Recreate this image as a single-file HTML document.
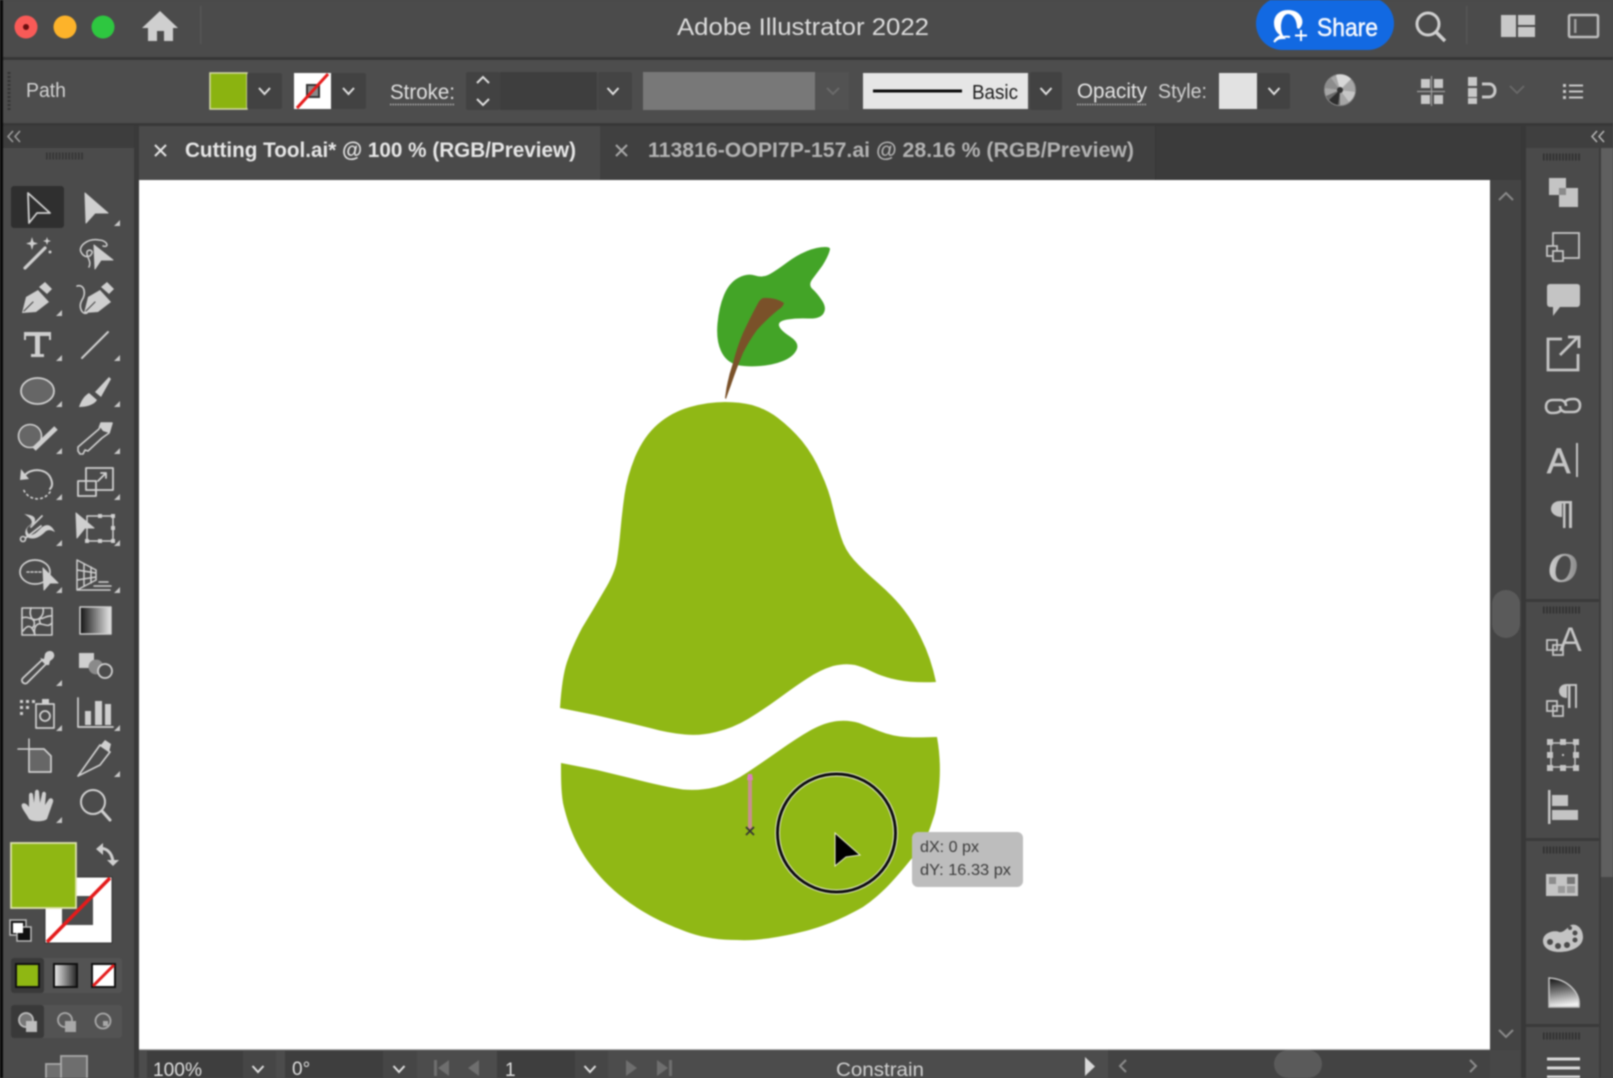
<!DOCTYPE html>
<html><head><meta charset="utf-8"><title>Adobe Illustrator 2022</title>
<style>
html,body{margin:0;padding:0;background:#4a4a4a;width:1613px;height:1078px;overflow:hidden}
svg{display:block;filter:blur(.7px)}
text{font-family:"Liberation Sans",sans-serif}
</style></head><body>
<svg xmlns="http://www.w3.org/2000/svg" width="1613" height="1078" viewBox="0 0 1613 1078">
<defs>
<path id="c" d="M0 6L6 6L6 0Z" fill="#c8c8c8"/>
<path id="ch" d="M-5.500 -3L0 3L5.500 -3" fill="none" stroke="#e0e0e0" stroke-width="2"/>
<linearGradient id="gr"><stop offset="0" stop-color="#111"/><stop offset="1" stop-color="#e8e8e8"/></linearGradient>
<linearGradient id="gr2"><stop offset="0" stop-color="#eee"/><stop offset="1" stop-color="#222"/></linearGradient>
<linearGradient id="gq" x1="0" y1="0" x2="0.150" y2="1"><stop offset="0" stop-color="#111"/><stop offset=".5" stop-color="#777"/><stop offset="1" stop-color="#f0f0f0"/></linearGradient>
<linearGradient id="go" x1="0" y1="0" x2="1" y2="0"><stop offset="0" stop-color="#d0d0d0"/><stop offset="1" stop-color="#8a8a8a"/></linearGradient>
</defs>

<!-- base panels -->
<rect width="1613" height="1078" fill="#4a4a4a"/>
<rect x="0" y="0" width="1613" height="57" fill="#4b4b4b"/>
<rect x="0" y="57" width="1613" height="3" fill="#363636"/>
<rect x="0" y="60" width="1613" height="63" fill="#4d4d4d"/>
<rect x="0" y="123" width="1613" height="3" fill="#383838"/>
<rect x="0" y="126" width="1613" height="54" fill="#3b3b3b"/>
<rect x="3" y="126" width="134" height="22" fill="#3d3d3d"/>
<rect x="3" y="148" width="131" height="930" fill="#4b4b4b"/>
<rect x="134" y="126" width="5" height="952" fill="#3a3a3a"/>
<rect x="0" y="0" width="3" height="1078" fill="#0a0a0a"/>
<!-- tabs -->
<rect x="139" y="126" width="461" height="54" fill="#4a4a4a"/>
<rect x="600" y="126" width="555" height="54" fill="#404040"/>
<rect x="1155" y="126" width="1" height="54" fill="#363636"/>
<path d="M155 145L166 156M166 145L155 156" stroke="#e4e4e4" stroke-width="2"/>
<text x="185" y="157" font-size="21" font-weight="bold" fill="#e6e6e6" textLength="391" lengthAdjust="spacingAndGlyphs">Cutting Tool.ai* @ 100 % (RGB/Preview)</text>
<path d="M616 145L627 156M627 145L616 156" stroke="#a8a8a8" stroke-width="2"/>
<text x="648" y="157" font-size="21" font-weight="bold" fill="#b2b2b2" textLength="486" lengthAdjust="spacingAndGlyphs">113816-OOPI7P-157.ai @ 28.16 % (RGB/Preview)</text>

<!-- right side -->
<rect x="1490" y="180" width="31" height="898" fill="#444"/>
<rect x="1521" y="126" width="5" height="952" fill="#383838"/>
<rect x="1526" y="126" width="87" height="22" fill="#3f3f3f"/>
<rect x="1526" y="148" width="73" height="930" fill="#4a4a4a"/>
<rect x="1601" y="148" width="12" height="729" fill="#5f5f5f"/>
<rect x="1601" y="877" width="12" height="201" fill="#454545"/>
<rect x="1599" y="148" width="2" height="930" fill="#3c3c3c"/>
<rect x="1526" y="599" width="73" height="3" fill="#3a3a3a"/>
<rect x="1526" y="838" width="73" height="3" fill="#3a3a3a"/>
<rect x="1526" y="1024" width="73" height="3" fill="#3a3a3a"/>
<path d="M1543 157H1580M1543 610H1580M1543 850H1580M1543 1036H1580" stroke="#262626" stroke-width="7" stroke-dasharray="1.600 1.600" opacity=".75"/>
<path d="M1597 131L1592 136.500L1597 142M1604 131L1599 136.500L1604 142" fill="none" stroke="#b8b8b8" stroke-width="1.500"/>
<rect x="1492" y="590" width="28" height="48" rx="14" fill="#5a5a5a"/>
<path d="M1499 200L1506 193L1513 200" fill="none" stroke="#8a8a8a" stroke-width="2"/>
<path d="M1499 1030L1506 1037L1513 1030" fill="none" stroke="#8a8a8a" stroke-width="2"/>

<!-- canvas -->
<rect x="139" y="180" width="1351" height="870" fill="#fff"/>
<rect x="139" y="1049" width="1351" height="1.500" fill="#bbb"/>

<!-- pear -->
<path fill="#90b815" d="M560 708Q562 677 567 662Q572 647 582 628Q593 610 604 591Q615 573 617 560Q619 547 620.500 530Q622 513 624.500 495Q627 477 635 457Q644 436 658 424Q672 412 690 407Q708 402 725 402Q740 402 752 405Q766 409 778 418Q791 428 802 441Q814 456 821 473Q829 490 833 508Q837 525 841 537Q845 550 854 560Q863 570 878 583Q894 597 904 610Q914 623 921 638Q931 658 936 682Q913 683 898 680Q883 677 873 672Q863 667 855 665Q845 663 833 666Q820 670 808 678Q797 685 780 697.500Q763 710 748 719Q733 728 716 732Q700 736 685 734.500Q668 733 650 728Q630 723 595 715Z"/>
<path fill="#90b815" d="M561 763L597 770L630 778Q665 787 683 789.500Q700 791 716 787Q732 783 748 772Q763 762 780 750Q797 738 811 730Q826 722 838 721Q849 720 859 723Q869 727 879 731Q889 735 900 736.500Q911 738 937 737C942 765 940 790 935 813C928 835 925 843 913 857C898 875 885 892 863 907C840 920 820 928 797 933C775 938 755 941 737 940C720 940 705 938 690 933C668 925 650 917 630 903C612 890 600 878 587 860C575 842 568 825 563 803C561 790 561 778 561 763Z"/>
<path fill="#43a427" d="M830 249Q829 255 822.500 265.500Q817 273 812.500 279Q808 285 812.500 289Q817 293 822 300.500Q827 308 823.500 313.500Q820 319 808.500 318.500Q797 318 787.500 319.500Q778 321 779 325.500Q780 330 790 336.500Q800 343 796.500 350Q793 357 783 361Q773 365 760 366Q747 367 737 365Q726 362 721 351Q716 340 717.500 323.500Q719 307 724 295Q729 283 738 278Q747 273 755 275.500Q763 278 770 274Q777 270 787 262.500Q797 255 807 251Q817 247 825 247Q830 247 830 249Z"/>
<path fill="#7a5129" d="M763 298Q775 297 784 303Q783 307 778 310Q768 318 757 330Q749 341 743 353Q736 370 731 385Q728 393 726 399L725 398Q727 380 733 363Q737 347 743 333Q750 318 757 305Q760 299 763 298Z"/>
<!-- guide -->
<path d="M750 776V829" stroke="#c98f8f" stroke-width="4"/>
<path d="M748 774L752 774L753 780L747 780Z" fill="#dd7fc0"/>
<path d="M746 827L754 835M754 827L746 835" stroke="#333" stroke-width="1.700"/>
<!-- cursor -->
<circle cx="836.500" cy="833" r="59" fill="none" stroke="#e8eecf" stroke-width="5"/>
<circle cx="836.500" cy="833" r="59" fill="none" stroke="#0c0c0c" stroke-width="3"/>
<path d="M835 833L860 855L846 857L835 866Z" fill="#000" stroke="#e8eecf" stroke-width="1"/>
<!-- tooltip -->
<rect x="912" y="832" width="111" height="55" rx="6" fill="#bdbdbd"/>
<text x="920" y="852" font-size="16" fill="#3a3a3a" textLength="59" lengthAdjust="spacingAndGlyphs">dX: 0 px</text>
<text x="920" y="875" font-size="16" fill="#3a3a3a" textLength="91" lengthAdjust="spacingAndGlyphs">dY: 16.33 px</text>

<!-- title bar -->
<circle cx="26" cy="27" r="11.500" fill="#f95a57"/><circle cx="26" cy="27" r="3" fill="#6b0f0f"/>
<circle cx="65" cy="27" r="11.500" fill="#fdb32a"/>
<circle cx="103" cy="27" r="11.500" fill="#2ec740"/>
<path d="M160 11L178 28H173V41H164V31H157V41H148V28H142Z" fill="#cfcfcf"/>
<rect x="200" y="6" width="1.500" height="38" fill="#565656"/>
<text x="677" y="35" font-size="24" fill="#dcdcdc" textLength="252" lengthAdjust="spacingAndGlyphs">Adobe Illustrator 2022</text>
<rect x="1256" y="-3" width="138" height="53" rx="26.500" fill="#1269e2"/>
<path d="M1288 10C1279 10 1274 16 1274 23C1274 29 1277 33 1280 35C1277 37 1274 39 1274 41C1278 39 1282 39 1286 39C1284 37 1281 34 1281 27C1281 20 1284 14 1288 14C1293 14 1297 20 1297 28L1299 29C1302 26 1303 23 1302 19C1300 13 1295 10 1288 10Z" fill="#fff"/>
<path d="M1274 42C1278 37 1286 36 1290 37M1301 30V41M1295 35.500H1307" fill="none" stroke="#fff" stroke-width="2"/>
<text x="1317" y="36" font-size="25" fill="#f4f8ff" stroke="#f4f8ff" stroke-width=".5" textLength="61" lengthAdjust="spacingAndGlyphs">Share</text>
<circle cx="1428" cy="24" r="11" fill="none" stroke="#cfcfcf" stroke-width="3"/>
<path d="M1436 32L1445 41" stroke="#cfcfcf" stroke-width="3.500"/>
<rect x="1466" y="6" width="1.500" height="38" fill="#565656"/>
<path d="M1501 15H1516V37H1501ZM1518 15H1535V25H1518ZM1518 27H1535V37H1518Z" fill="#c8c8c8"/>
<rect x="1569" y="15" width="29" height="22" rx="1.500" fill="none" stroke="#bdbdbd" stroke-width="2.500"/>
<rect x="1574" y="19" width="2.500" height="14" fill="#9e9e9e"/>

<!-- control bar -->
<path d="M9 72V112" stroke="#333" stroke-width="3" stroke-dasharray="2 2"/>
<text x="26" y="97" font-size="20" fill="#d2d2d2" textLength="40" lengthAdjust="spacingAndGlyphs">Path</text>
<rect x="210" y="73" width="37" height="36" fill="#8bb310" stroke="#d6dca8" stroke-width="1.500"/>
<rect x="247" y="73" width="35" height="36" rx="2" fill="#424242"/>
<use href="#ch" x="264.500" y="91"/>
<rect x="294" y="73" width="37" height="36" fill="#fff"/>
<rect x="307" y="85" width="12" height="12" fill="#8a8a8a" stroke="#333" stroke-width="2"/>
<path d="M297 108L328 74" stroke="#e61c1c" stroke-width="3"/>
<rect x="331" y="73" width="35" height="36" rx="2" fill="#424242"/>
<use href="#ch" x="348.500" y="91"/>
<text x="390" y="99" font-size="21" fill="#e0e0e0" textLength="65" lengthAdjust="spacingAndGlyphs">Stroke:</text>
<path d="M390 104.500H455" stroke="#b0b0b0" stroke-width="1.500" stroke-dasharray="1.500 1"/>
<rect x="466" y="72" width="34" height="38" rx="2" fill="#424242"/>
<path d="M477 83L483 77L489 83M477 99L483 105L489 99" fill="none" stroke="#e0e0e0" stroke-width="2"/>
<rect x="500" y="72" width="97" height="38" fill="#3e3e3e"/>
<rect x="598" y="72" width="34" height="38" rx="2" fill="#444"/>
<use href="#ch" x="613" y="91"/>
<rect x="643" y="72" width="172" height="38" fill="#787878"/>
<rect x="815" y="72" width="34" height="38" fill="#525252"/>
<path d="M827 88L833 94L839 88" fill="none" stroke="#6a6a6a" stroke-width="2"/>
<rect x="863" y="73" width="165" height="36" fill="#e6e6e6"/>
<rect x="873" y="89.500" width="89" height="3" fill="#0a0a0a"/>
<text x="972" y="99" font-size="20" fill="#1c1c1c" textLength="46" lengthAdjust="spacingAndGlyphs">Basic</text>
<rect x="1030" y="72" width="32" height="38" rx="2" fill="#424242"/>
<use href="#ch" x="1046" y="91"/>
<text x="1077" y="98" font-size="21" fill="#e4e4e4" textLength="70" lengthAdjust="spacingAndGlyphs">Opacity</text>
<path d="M1077 104.500H1147" stroke="#b0b0b0" stroke-width="1.500" stroke-dasharray="1.500 1"/>
<text x="1158" y="98" font-size="20" fill="#d0d0d0" textLength="49" lengthAdjust="spacingAndGlyphs">Style:</text>
<rect x="1219" y="73" width="38" height="36" fill="#e2e2e2"/>
<rect x="1257" y="73" width="33" height="36" rx="2" fill="#424242"/>
<use href="#ch" x="1274" y="91"/>
<!-- color wheel -->
<circle cx="1340" cy="90" r="15.500" fill="#a6a6a6" stroke="#8a8a8a" stroke-width="1"/>
<path d="M1340 90L1326 96A15 15 0 0 0 1340 105Z" fill="#6a6a6a"/>
<path d="M1340 90L1329 100A15 15 0 0 0 1338 105Z" fill="#2e2e2e"/>
<path d="M1340 90L1351 79A15 15 0 0 0 1336 75Z" fill="#d8d8d8"/>
<path d="M1340 90L1355 92A15 15 0 0 1 1349 102Z" fill="#c6c6c6"/>
<path d="M1340 90L1325 88A15 15 0 0 1 1331 78Z" fill="#8c8c8c"/>
<circle cx="1340" cy="90" r="3" fill="#333"/>
<path d="M1421 79h9v9h-9zM1434 79h9v9h-9zM1421 95h9v9h-9zM1434 95h9v9h-9z" fill="#c8c8c8"/>
<path d="M1417 91.500H1445M1431.500 76V106" stroke="#a0a0a0" stroke-width="1.200"/>
<path d="M1468 77h9v9h-9zM1468 88h9v9h-9zM1468 98h9v6h-9z" fill="#c8c8c8"/>
<path d="M1482 84H1489C1497 84 1497 97 1489 97H1482" fill="none" stroke="#c8c8c8" stroke-width="3"/>
<path d="M1510 86L1517 93L1524 86" fill="none" stroke="#6a6a6a" stroke-width="1.800"/>
<path d="M1563 84h3v3h-3zM1563 90h3v3h-3zM1563 96h3v3h-3z" fill="#c8c8c8"/>
<path d="M1569 85.500H1583M1569 91.500H1583M1569 97.500H1583" stroke="#c8c8c8" stroke-width="2"/>

<!-- left panel header -->
<path d="M13 131L8 136.500L13 142M20 131L15 136.500L20 142" fill="none" stroke="#a0a0a0" stroke-width="1.500"/>
<path d="M46 156H84" stroke="#2b2b2b" stroke-width="7" stroke-dasharray="1.600 1.600" opacity=".7"/>

<!-- tools -->
<rect x="11" y="186" width="53" height="42" rx="3" fill="#2f2f2f"/>
<g fill="#cfcfcf" stroke="#cfcfcf" stroke-linecap="round" stroke-linejoin="round">
<path d="M28 193L50 213L37 213L29 223Z" fill="none" stroke-width="1.800"/>
<path d="M85 193L108 213L95 213L86 223Z" stroke-width="1"/>
<g transform="translate(37,254)">
<path d="M-12 14L8 -6" stroke-width="3.200" fill="none"/>
<path d="M-5 -17L-3.500 -12L1 -10.500L-3.500 -9L-5 -4L-6.500 -9L-11 -10.500L-6.500 -12Z" stroke="none"/>
<path d="M10 -17L11 -14L14 -13L11 -12L10 -9L9 -12L6 -13L9 -14Z" stroke="none"/>
<circle cx="13" cy="-2" r="1.500" stroke="none"/>
</g>
<g transform="translate(96,254)">
<path d="M-2 -9L17 6L5 6L-1 15Z" stroke-width="1"/>
<path d="M7 -8C14 -6 11 -14 3 -14C-8 -16 -18 -8 -15 -2C-12 4 -6 4 -4 -1C-3 -4 -8 -5 -9 -2C-10 3 -4 7 -7 13" fill="none" stroke-width="1.500"/>
</g>
<g transform="translate(37,300)">
<path d="M-15 13L-11 -3L1 -10L12 2L-1 12Z" stroke="none"/>
<path d="M2 -13L8 -18L15 -11L10 -6Z" stroke="none"/>
<path d="M-13 11L-4 2" stroke="#4b4b4b" stroke-width="1.200" fill="none"/>
</g>
<g transform="translate(99,300)">
<path d="M-15 13L-11 -3L1 -10L12 2L-1 12Z" stroke="none"/>
<path d="M2 -13L8 -18L15 -11L10 -6Z" stroke="none"/>
<path d="M-13 11L-4 2" stroke="#4b4b4b" stroke-width="1.200" fill="none"/>
<path d="M-22 -14C-14 -16 -13 -6 -17 0C-21 7 -17 15 -12 13" fill="none" stroke-width="1.600"/>
</g>
<path transform="translate(37,345)" d="M-13 -13H14V-5H12V-9H3V9H7V12H-6V9H-2V-9H-11V-5H-13Z" stroke="none"/>
<path d="M82 358L108 332" stroke-width="2" fill="none"/>
<ellipse cx="37.500" cy="391" rx="16.500" ry="13" fill="#666" stroke-width="1.800"/>
<g transform="translate(96,391)">
<path d="M-1 1L13 -14L15 -12L5 6Z" stroke="none"/>
<path d="M-17 16C-15 10 -12 5 -7 2L1 9C-2 14 -10 16 -17 16Z" stroke="none"/>
</g>
<circle cx="30" cy="436" r="11.500" fill="#666" stroke-width="1.600"/>
<path d="M34 449L56 428" stroke-width="5" fill="none" stroke-linecap="butt"/>
<g transform="translate(96,438)">
<path d="M-18 9L3 -9L5 -15L16 -15L13 -5L6 0L-8 13L-11 12L-13 16L-16 16L-18 13Z" fill="none" stroke-width="1.600"/>
<path d="M3 -12L5 -15L16 -15L13 -5L7 -7Z" stroke="none"/>
</g>
<g transform="translate(37,482)">
<path d="M-12 -7C-6 -14 10 -14 14 -3C16 2 15 5 13 7" fill="none" stroke-width="2"/>
<path d="M-16 -13L-8 -3L-17 -2Z" stroke="none"/>
<path d="M13 10A15 15 0 0 1 -14 6" fill="none" stroke-width="1.700" stroke-dasharray="1.500 3.500"/>
</g>
<g transform="translate(95,483)">
<rect x="-9" y="-15" width="27" height="22" fill="none" stroke-width="1.800"/>
<rect x="-17" y="-2" width="18" height="15" fill="none" stroke-width="1.800"/>
<path d="M3 -2L11 -10M6 -10H11V-5" fill="none" stroke-width="1.800"/>
</g>
<g transform="translate(37,528)">
<path d="M-13 -14C-6 -13 -1 -12 -2 -7C-3 -2 -13 -3 -9 5C-6 9 -2 6 3 1C9 -5 14 -4 18 4C14 2 11 1 8 4C4 8 -2 12 -8 10C-14 7 -12 0 -7 -3C-4 -5 -4 -9 -13 -14Z" stroke="none"/>
<path d="M-14 12L4 -2M-6 -1L5 -12" fill="none" stroke-width="1.800"/>
<circle cx="-14" cy="11" r="2.500" fill="#4b4b4b" stroke-width="1.600"/>
</g>
<g transform="translate(94,528)">
<rect x="-7" y="-12" width="26" height="25" fill="none" stroke-width="1.500"/>
<path d="M-18 -15L0 0L-9 0L-17 10Z" stroke-width="1"/>
<path d="M-9 11h4v4h-4zM4 11h4v4h-4zM17 11h4v4h-4zM17 -2h4v4h-4zM17 -14h4v4h-4zM4 -14h4v4h-4z" stroke="none"/>
</g>
<g transform="translate(37,575)">
<ellipse cx="-2" cy="-3" rx="15" ry="12" fill="none" stroke-width="1.700"/>
<path d="M-10 -3H4" fill="none" stroke-width="1.500" stroke-dasharray="2 2"/>
<path d="M6 -7L21 8L13 8L7 15Z" stroke-width="1"/>
</g>
<g transform="translate(94,575)" fill="none" stroke-width="1.500">
<path d="M-17 -15V15H16M-17 -15L2 -5V5L-17 15M-10 -11V11M-3 -8V8M-17 -5L2 -2M-17 5L2 2"/>
<path d="M5 7H14M0 11H17"/>
</g>
<g transform="translate(37,621)" fill="none" stroke-width="1.600">
<rect x="-15" y="-13" width="30" height="27"/>
<path d="M-15 -3C-8 -6 -3 2 3 -3C8 -8 6 -12 6 -13M-14 10C-9 3 -5 4 -2 14M-2 14C-4 6 0 2 4 3C10 4 11 6 15 2M3 -3C6 -1 9 -6 15 -5M-6 -13C-8 -7 -6 -3 -3 0C-2 3 -3 6 -5 7M3 -3C2 0 3 2 4 3"/>
</g>
<rect x="80" y="607" width="31" height="27" fill="url(#gr)" stroke-width="1.500"/>
<g transform="translate(37,668)">
<path d="M-14 10L5 -8L9 -4L-10 15C-13 17 -17 13 -14 10Z" fill="none" stroke-width="1.800"/>
<path d="M3 -10L7 -9L8 -14C10 -18 16 -18 17 -14C18 -11 16 -9 13 -7L12 -3L9 -3Z" stroke="none"/>
</g>
<g transform="translate(95,668)">
<rect x="-16" y="-15" width="15" height="15" stroke="none"/>
<circle cx="1" cy="-1" r="7.500" fill="#8a8a8a" stroke="none"/>
<circle cx="10" cy="3" r="7" fill="#4b4b4b" stroke-width="1.800"/>
</g>
<g transform="translate(37,713)">
<path d="M-17 -13h3v3h-3zM-11 -13h3v3h-3zM-5 -13h3v3h-3zM-17 -7h3v3h-3zM-11 -7h3v3h-3zM-17 -1h3v3h-3z" stroke="none"/>
<rect x="-1" y="-9" width="18" height="24" fill="none" stroke-width="1.700"/>
<rect x="5" y="-14" width="7" height="5" stroke="none"/>
<circle cx="8" cy="3" r="5" fill="none" stroke-width="1.800"/>
</g>
<g transform="translate(95,713)">
<path d="M-17 -15V14H18" fill="none" stroke-width="1.700"/>
<rect x="-10" y="-2" width="6" height="14" stroke="none"/>
<rect x="0" y="-12" width="7" height="24" stroke="none"/>
<rect x="10" y="-9" width="6" height="21" stroke="none"/>
</g>
<g transform="translate(37,759)">
<path d="M-8 -10H7L14 -3V13H-8Z" fill="#666" stroke-width="1.700"/>
<path d="M-8 -20V-10M-19 -10H-8" fill="none" stroke-width="1.500"/>
</g>
<g transform="translate(95,760)">
<path d="M-17 16L5 -15L15 -8L5 5Z" fill="none" stroke-width="1.700"/>
<path d="M5 -14L10 -20L16 -16L14 -8Z" stroke="none"/>
</g>
<path transform="translate(38,805)" d="M-9 14C-12 8 -18 2 -16 -1C-14 -3 -11 -1 -9 2L-9 -10C-9 -13 -5 -13 -5 -10L-4 -2L-3 -13C-3 -16 1 -16 1 -13L2 -2L4 -11C4 -14 8 -14 8 -11L7 0L11 -6C13 -8 16 -6 15 -3L9 14C6 17 -6 17 -9 14Z" stroke="none"/>
<circle cx="93" cy="802" r="12" fill="none" stroke-width="2"/>
<path d="M102 811L110 820" stroke-width="3" fill="none"/>
</g>
<!-- corners -->
<use href="#c" x="114" y="220"/>
<use href="#c" x="56" y="310"/>
<use href="#c" x="56" y="355"/><use href="#c" x="114" y="355"/>
<use href="#c" x="56" y="401"/><use href="#c" x="114" y="401"/>
<use href="#c" x="56" y="448"/><use href="#c" x="114" y="448"/>
<use href="#c" x="56" y="494"/><use href="#c" x="114" y="494"/>
<use href="#c" x="56" y="540"/><use href="#c" x="114" y="540"/>
<use href="#c" x="56" y="587"/><use href="#c" x="114" y="587"/>
<use href="#c" x="56" y="680"/>
<use href="#c" x="56" y="725"/><use href="#c" x="114" y="725"/>
<use href="#c" x="114" y="771"/>
<use href="#c" x="56" y="817"/>

<!-- fill/stroke -->
<rect x="45" y="877" width="67" height="66" fill="#fff" stroke="#333" stroke-width="1"/>
<rect x="62" y="896" width="31" height="29" fill="#4b4b4b"/>
<path d="M47 942L110 878" stroke="#e41b1b" stroke-width="3.500"/>
<rect x="11" y="843" width="65" height="65" fill="#8fb713" stroke="#dde3ad" stroke-width="1.800"/>
<path d="M98 849C106 847 112 852 113 862" fill="none" stroke="#cfcfcf" stroke-width="3"/>
<path d="M96 849L103 843V855ZM107 860H119L113 866Z" fill="#cfcfcf"/>
<rect x="10" y="920" width="16" height="15" fill="#1a1a1a" stroke="#bbb" stroke-width="1.500"/>
<rect x="17" y="927" width="14" height="14" fill="#111" stroke="#bbb" stroke-width="1.500"/>
<rect x="13" y="923" width="10" height="10" fill="#fff"/>
<!-- mode buttons -->
<rect x="11" y="958" width="111" height="35" rx="3" fill="#535353"/>
<rect x="11" y="958" width="33" height="35" rx="3" fill="#393939"/>
<rect x="16" y="964" width="23" height="23" fill="#8fb713" stroke="#111" stroke-width="2"/>
<rect x="54" y="964" width="23" height="23" fill="url(#gr2)" stroke="#111" stroke-width="2"/>
<rect x="92" y="964" width="23" height="23" fill="#fff" stroke="#111" stroke-width="2"/>
<path d="M93 986L114 965" stroke="#e41b1b" stroke-width="3"/>
<rect x="11" y="1005" width="111" height="33" rx="3" fill="#535353"/>
<rect x="11" y="1005" width="33" height="33" rx="3" fill="#393939"/>
<g fill="#bdbdbd">
<circle cx="26" cy="1020" r="7" fill="#777" stroke="#bdbdbd" stroke-width="1.800"/>
<rect x="26" y="1021" width="11" height="11"/>
<circle cx="65" cy="1020" r="7" fill="#5a5a5a" stroke="#a8a8a8" stroke-width="1.800"/>
<rect x="65" y="1021" width="11" height="11" fill="#a8a8a8"/>
<circle cx="103" cy="1021" r="7.500" fill="#5a5a5a" stroke="#a8a8a8" stroke-width="1.800"/>
<rect x="103" y="1021" width="5" height="5" fill="#a8a8a8"/>
</g>
<!-- screen mode -->
<rect x="61" y="1056" width="26" height="24" fill="#6e6e6e" stroke="#a8a8a8" stroke-width="1.800"/>
<rect x="46" y="1064" width="15" height="16" fill="#6e6e6e" stroke="#a8a8a8" stroke-width="1.800"/>

<!-- status bar -->
<rect x="139" y="1050" width="1351" height="28" fill="#4c4c4c"/>
<rect x="147" y="1051" width="96" height="27" fill="#3e3e3e"/>
<rect x="243" y="1051" width="33" height="27" fill="#464646"/>
<use href="#ch" x="258" y="1069"/>
<rect x="285" y="1051" width="98" height="27" fill="#3e3e3e"/>
<rect x="383" y="1051" width="34" height="27" fill="#464646"/>
<use href="#ch" x="399" y="1069"/>
<rect x="497" y="1051" width="78" height="27" fill="#3e3e3e"/>
<rect x="575" y="1051" width="33" height="27" fill="#464646"/>
<use href="#ch" x="590" y="1069"/>
<text x="153" y="1076" font-size="19" fill="#dedede" textLength="49" lengthAdjust="spacingAndGlyphs">100%</text>
<text x="292" y="1075" font-size="19" fill="#dedede">0°</text>
<text x="505" y="1076" font-size="19" fill="#dedede">1</text>
<path d="M434 1060h3v16h-3zM449 1060V1076L438 1068ZM479 1060V1076L468 1068ZM626 1060V1076L637 1068ZM657 1060V1076L668 1068ZM669 1060h3v16h-3z" fill="#6e6e6e"/>
<text x="836" y="1076" font-size="19" fill="#cfcfcf" textLength="88" lengthAdjust="spacingAndGlyphs">Constrain</text>
<path d="M1085 1057V1076L1095 1066.500Z" fill="#d8d8d8"/>
<rect x="1108" y="1050" width="382" height="28" fill="#434343"/>
<path d="M1126 1060L1120 1066L1126 1072M1470 1060L1476 1066L1470 1072" fill="none" stroke="#8c8c8c" stroke-width="2"/>
<rect x="1274" y="1050" width="48" height="28" rx="14" fill="#5a5a5a"/>
<rect x="1490" y="1050" width="31" height="28" fill="#474747"/>

<!-- right dock icons -->
<g fill="#c4c4c4" stroke="#c4c4c4">
<g transform="translate(1563,192)" stroke="none">
<path d="M-14 -14H3V3H-14Z"/><path d="M-4 -4H15V15H-4Z"/>
<path d="M-4 -4H3V3H-4Z" fill="#8a8a8a"/>
</g>
<g transform="translate(1563,245)" fill="none" stroke-width="1.800">
<rect x="-10" y="-12" width="26" height="25"/>
<rect x="-16" y="1" width="10" height="10" fill="#4a4a4a"/>
<rect x="-10" y="6" width="10" height="10" fill="#4a4a4a"/>
</g>
<path stroke="none" d="M1550 284H1577Q1580 284 1580 287V303Q1580 307 1577 307H1560L1553 316L1553 307H1550Q1547 307 1547 303V287Q1547 284 1550 284Z"/>
<g transform="translate(1563,353)" fill="none" stroke-width="2.800">
<path d="M-1 -14H-15V17H15V1"/><path d="M-3 2L14 -15M5 -16H16V-5"/>
</g>
<g transform="translate(1563,406)" fill="none" stroke-width="2.600">
<path d="M-2 4C-4 7 -8 7 -11 7C-15 7 -17 4 -17 1C-17 -3 -15 -6 -10 -6H-3C0 -6 3 -4 3 0"/>
<path d="M2 -4C4 -7 8 -7 11 -7C15 -7 17 -4 17 -1C17 3 15 6 10 6H3C0 6 -3 4 -3 0"/>
</g>
<text x="1547" y="473" font-size="35" stroke="#c4c4c4" stroke-width=".7" fill="#c4c4c4">A</text>
<rect x="1576" y="443" width="2" height="34" stroke="none"/>
<g transform="translate(1563,515)" stroke="none">
<path d="M-1 -14V2C-8 2 -12 -2 -12 -6C-12 -11 -8 -14 -3 -14Z"/>
<rect x="0" y="-14" width="2.500" height="27"/><rect x="6" y="-14" width="3" height="27"/>
<rect x="-1" y="-14" width="10" height="2.500"/>
</g>
<text x="1548" y="582" font-size="42" font-style="italic" font-weight="bold" stroke="none" fill="url(#go)" style="font-family:'Liberation Serif',serif" textLength="30" lengthAdjust="spacingAndGlyphs">O</text>
<g transform="translate(1563,643)">
<g fill="none" stroke-width="1.800"><rect x="-16" y="-3" width="10" height="10"/><rect x="-10" y="2" width="10" height="10"/></g>
<text x="-4" y="8" font-size="34" stroke="none" fill="#c4c4c4">A</text>
</g>
<g transform="translate(1563,700)">
<g fill="none" stroke-width="1.800"><rect x="-16" y="1" width="10" height="10"/><rect x="-10" y="6" width="10" height="10"/></g>
<g stroke="none"><path d="M4 -16V-2C-1 -2 -4 -5 -4 -9C-4 -13 -1 -16 4 -16Z"/><rect x="5" y="-16" width="2.500" height="24"/><rect x="12" y="-16" width="2" height="24"/><rect x="4" y="-16" width="10" height="2"/></g>
</g>
<g transform="translate(1563,754)">
<rect x="-12" y="-11" width="24" height="24" fill="none" stroke-width="1.500"/>
<path d="M-16 -15h6v6h-6zM-3 -15h6v6h-6zM10 -15h6v6h-6zM-16 -2h6v6h-6zM10 -2h6v6h-6zM-16 11h6v6h-6zM-3 11h6v6h-6zM10 11h6v6h-6zM-1 0h2v2h-2z" stroke="none"/>
</g>
<g transform="translate(1563,808)" stroke="none">
<rect x="-15" y="-18" width="2.500" height="34"/>
<rect x="-11" y="-13" width="16" height="11"/>
<rect x="-11" y="2" width="26" height="10"/>
</g>
<g transform="translate(1563,885)" stroke="none">
<rect x="-17" y="-11" width="32" height="22"/>
<rect x="-14" y="-8" width="7" height="7" fill="#8c8c8c"/><rect x="4" y="-8" width="8" height="7" fill="#777"/>
<rect x="-5" y="1" width="7" height="7" fill="#999"/><rect x="4" y="1" width="8" height="7" fill="#999"/>
</g>
<g transform="translate(1563,938)" stroke="none">
<path d="M-20 3C-20 -6 -8 -8 -4 -6C0 -5 3 -9 8 -13C14 -15 20 -9 20 -1C20 9 8 14 -4 14C-14 14 -20 9 -20 3Z"/>
<g fill="#4a4a4a"><circle cx="-13" cy="4" r="3"/><circle cx="-5" cy="8" r="3"/><circle cx="4" cy="7" r="3"/><circle cx="12" cy="2" r="2.500"/><circle cx="12" cy="-5" r="2.500"/><circle cx="7" cy="-10" r="2"/></g>
</g>
<path d="M1549 978C1568 979 1581 993 1579 1007H1549Z" fill="url(#gq)" stroke="#c4c4c4" stroke-width="1.500"/>
<path d="M1547 1059H1580M1547 1068H1580M1547 1077H1580" stroke="#d8d8d8" stroke-width="3" fill="none"/>
</g>
</svg>
</body></html>
